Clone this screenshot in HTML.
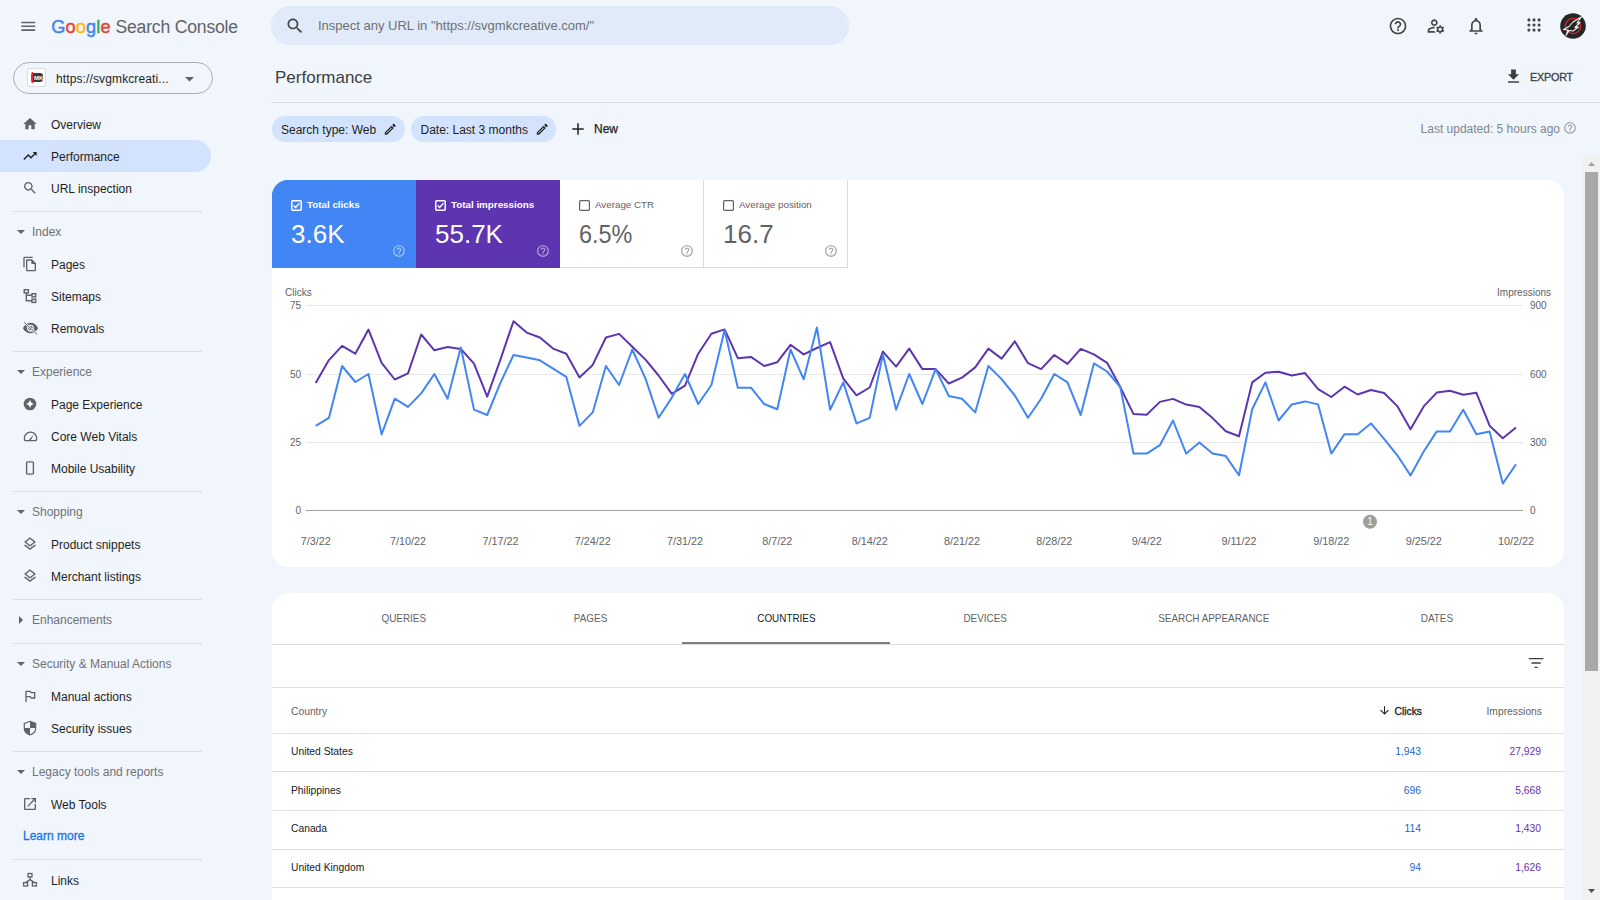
<!DOCTYPE html>
<html><head><meta charset="utf-8"><style>
*{margin:0;padding:0;box-sizing:border-box}
html,body{width:1600px;height:900px;overflow:hidden}
body{background:#f1f5fc;font-family:"Liberation Sans",sans-serif;position:relative}
.ic{position:absolute;display:block}
.nt{position:absolute;left:51px;height:16px;line-height:16px;font-size:12px;white-space:nowrap}
.nh{position:absolute;left:32px;height:16px;line-height:16px;font-size:12px;color:#6f7377;white-space:nowrap}
.cl{position:absolute;top:198px;height:14px;line-height:14px;font-size:9.8px;white-space:nowrap}
.cv{position:absolute;top:218.5px;height:30px;line-height:30px;font-size:26px;white-space:nowrap}
.tab{position:absolute;top:610px;width:200px;text-align:center;height:16px;line-height:16px;font-size:11px;white-space:nowrap}
.td{position:absolute;height:16px;line-height:16px;font-size:10.3px;white-space:nowrap}
.r{text-align:right}
</style></head><body>
<!-- header -->
<svg class="ic" style="left:18.8px;top:16.8px;width:18.5px;height:18.5px" viewBox="0 0 24 24"><path fill="#5f6368" d="M3 18h18v-2H3v2zm0-5h18v-2H3v2zm0-7v2h18V6H3z"/></svg>
<div style="position:absolute;left:51.2px;top:14.6px;height:24px;line-height:24px;font-size:18.2px;letter-spacing:.15px;white-space:nowrap"><span style="color:#4285f4;-webkit-text-stroke:.45px #4285f4">G</span><span style="color:#ea4335;-webkit-text-stroke:.45px #ea4335">o</span><span style="color:#fbbc05;-webkit-text-stroke:.45px #fbbc05">o</span><span style="color:#4285f4;-webkit-text-stroke:.45px #4285f4">g</span><span style="color:#34a853;-webkit-text-stroke:.45px #34a853">l</span><span style="color:#ea4335;-webkit-text-stroke:.45px #ea4335">e</span></div>
<div style="position:absolute;left:115.5px;top:15px;height:24px;line-height:24px;font-size:17.6px;letter-spacing:-.2px;white-space:nowrap;color:#616467">Search Console</div>
<div style="position:absolute;left:271px;top:6px;width:578px;height:39px;border-radius:19.5px;background:#e1eaf8"></div>
<svg class="ic" style="left:284.5px;top:16px;width:20px;height:20px" viewBox="0 0 24 24"><path fill="#444746" d="M15.5 14h-.79l-.28-.27C15.41 12.59 16 11.11 16 9.5 16 5.91 13.09 3 9.5 3S3 5.91 3 9.5 5.91 16 9.5 16c1.61 0 3.09-.59 4.23-1.57l.27.28v.79l5 4.99L20.49 19l-4.99-5zm-6 0C7.01 14 5 11.99 5 9.5S7.01 5 9.5 5 14 7.01 14 9.5 11.99 14 9.5 14z"/></svg>
<div style="position:absolute;left:318px;top:18px;height:16px;line-height:16px;font-size:13px;color:#6d7175;white-space:nowrap">Inspect any URL in "https://svgmkcreative.com/"</div>
<svg class="ic" style="left:1388px;top:15.5px;width:20px;height:20px" viewBox="0 0 24 24"><path fill="#444746" d="M11 18h2v-2h-2v2zm1-16C6.48 2 2 6.48 2 12s4.48 10 10 10 10-4.48 10-10S17.52 2 12 2zm0 18c-4.41 0-8-3.59-8-8s3.59-8 8-8 8 3.59 8 8-3.59 8-8 8zm0-14c-2.21 0-4 1.79-4 4h2c0-1.1.9-2 2-2s2 .9 2 2c0 2-3 1.75-3 5h2c0-2.25 3-2.5 3-5 0-2.21-1.79-4-4-4z"/></svg>
<svg class="ic" style="left:1426px;top:15.5px;width:20px;height:20px" viewBox="0 0 24 24"><path fill="#444746" d="M4 18v-.65c0-.34.16-.66.41-.81C6.1 15.53 8.03 15 10 15c.03 0 .05 0 .08.01.1-.7.3-1.37.59-1.98-.22-.02-.44-.03-.67-.03-2.42 0-4.68.67-6.61 1.82-.88.52-1.39 1.5-1.39 2.53V20h9.26c-.42-.6-.75-1.28-.97-2H4zM10 12c2.21 0 4-1.79 4-4s-1.79-4-4-4-4 1.79-4 4 1.79 4 4 4zm0-6c1.1 0 2 .9 2 2s-.9 2-2 2-2-.9-2-2 .9-2 2-2zM20.75 16c0-.22-.03-.42-.06-.63l1.14-1.01-1-1.73-1.450.49c-.32-.27-.68-.48-1.08-.63L18 11h-2l-.3 1.49c-.4.15-.76.36-1.08.63l-1.45-.49-1 1.73 1.14 1.010c-.03.21-.06.41-.06.63s.03.42.06.63l-1.14 1.01 1 1.73 1.45-.49c.32.27.68.48 1.08.63L16 21h2l.3-1.49c.4-.15.76-.36 1.08-.63l1.45.49 1-1.73-1.14-1.01c.03-.21.06-.41.06-.63zM17 18c-1.1 0-2-.9-2-2s.9-2 2-2 2 .9 2 2-.9 2-2 2z"/></svg>
<svg class="ic" style="left:1465.5px;top:15.5px;width:20px;height:20px" viewBox="0 0 24 24"><path fill="#444746" d="M12 22c1.1 0 2-.9 2-2h-4c0 1.1.9 2 2 2zm6-6v-5c0-3.07-1.64-5.64-4.5-6.32V4c0-.83-.67-1.5-1.5-1.5s-1.5.67-1.5 1.5v.68C7.63 5.36 6 7.92 6 11v5l-2 2v1h16v-1l-2-2zm-2 1H8v-6c0-2.48 1.51-4.5 4-4.5s4 2.02 4 4.5v6z"/></svg>
<svg class="ic" style="left:1524.4px;top:15.4px;width:20px;height:20px" viewBox="0 0 20 20" fill="#444746"><circle cx="4.9" cy="4.9" r="1.55"/><circle cx="10" cy="4.9" r="1.55"/><circle cx="15.1" cy="4.9" r="1.55"/><circle cx="4.9" cy="10" r="1.55"/><circle cx="10" cy="10" r="1.55"/><circle cx="15.1" cy="10" r="1.55"/><circle cx="4.9" cy="15.1" r="1.55"/><circle cx="10" cy="15.1" r="1.55"/><circle cx="15.1" cy="15.1" r="1.55"/></svg>
<svg class="ic" style="left:1560px;top:12.6px;width:26px;height:26px" viewBox="0 0 26 26"><circle cx="13" cy="13" r="12.8" fill="#262626"/><circle cx="13" cy="13" r="7.6" fill="none" stroke="#d7262b" stroke-width="1.4"/><path d="M3.5 16.5 L9 13.5 L13 9 L21.5 3.8 L17 10 L20 9.5 L15 14.5 L18.5 14 L13 18 L9 17.5 L6 22.5 L8 17z" fill="#262626" stroke="#f0f0f0" stroke-width="1.1" stroke-linejoin="round"/></svg>

<!-- property selector -->
<div style="position:absolute;left:13px;top:62px;width:200px;height:32px;border:1px solid #acb0b4;border-radius:16px"></div>
<div style="position:absolute;left:27.2px;top:68.3px;width:18.5px;height:18.3px;background:#fff;border:1px solid #dcdcdc;border-radius:2px"></div>
<div style="position:absolute;left:31px;top:72px;width:2.5px;height:11px;background:#e3262b;border-radius:50%"></div>
<div style="position:absolute;left:33px;top:72.5px;width:9.5px;height:9.5px;background:#3a3a3a;border-radius:1px 3px 3px 1px"></div>
<div style="position:absolute;left:34px;top:74.5px;height:6px;line-height:6px;font-size:6px;font-weight:700;color:#fff;white-space:nowrap">MK</div>
<div style="position:absolute;left:56px;top:70.8px;height:16px;line-height:16px;font-size:12px;letter-spacing:.12px;color:#1f1f1f;white-space:nowrap">https://svgmkcreati...</div>
<svg class="ic" style="left:185px;top:77px;width:9px;height:5px" viewBox="0 0 9 5"><path fill="#5f6368" d="M0 0h9L4.5 4.5z"/></svg>

<div class="nt" style="top:116.5px;color:#1f1f1f">Overview</div>
<svg class="ic" style="left:22px;top:116px;width:16px;height:16px" viewBox="0 0 24 24"><path fill="#5f6368" d="M10 20v-6h4v6h5v-8h3L12 3 2 12h3v8z"/></svg>
<div style="position:absolute;left:0;top:140px;width:211px;height:32px;background:#d3e3fd;border-radius:0 16px 16px 0"></div><div class="nt" style="top:148.5px;color:#1f1f1f">Performance</div>
<svg class="ic" style="left:22px;top:148px;width:16px;height:16px" viewBox="0 0 24 24"><path fill="#1f1f1f" d="M16 6l2.29 2.29-4.88 4.88-4-4L2 16.59 3.41 18l6-6 4 4 6.3-6.29L22 12V6z"/></svg>
<div class="nt" style="top:180.5px;color:#1f1f1f">URL inspection</div>
<svg class="ic" style="left:22px;top:180px;width:16px;height:16px" viewBox="0 0 24 24"><path fill="#5f6368" d="M15.5 14h-.79l-.28-.27C15.41 12.59 16 11.11 16 9.5 16 5.91 13.09 3 9.5 3S3 5.91 3 9.5 5.91 16 9.5 16c1.61 0 3.09-.59 4.23-1.57l.27.28v.79l5 4.99L20.49 19l-4.99-5zm-6 0C7.01 14 5 11.99 5 9.5S7.01 5 9.5 5 14 7.01 14 9.5 11.99 14 9.5 14z"/></svg>
<div style="position:absolute;left:13px;top:211px;width:189px;height:1px;background:#dadce0"></div>
<svg class="ic" style="left:17px;top:228px;width:8px;height:8px" viewBox="0 0 8 8"><path fill="#5f6368" d="M0 2h8L4 6z"/></svg><div class="nh" style="top:224px">Index</div>
<div class="nt" style="top:256.5px;color:#1f1f1f">Pages</div>
<svg class="ic" style="left:22px;top:256px;width:16px;height:16px" viewBox="0 0 24 24"><path fill="#5f6368" d="M16 1H4c-1.1 0-2 .9-2 2v14h2V3h12V1zm-1 4H8c-1.1 0-1.99.9-1.99 2L6 21c0 1.1.89 2 1.99 2H19c1.1 0 2-.9 2-2V11l-6-6zM8 21V7h6v5h5v9H8z"/></svg>
<div class="nt" style="top:288.5px;color:#1f1f1f">Sitemaps</div>
<svg class="ic" style="left:22px;top:288px;width:16px;height:16px" viewBox="0 0 16 16"><g fill="none" stroke="#5f6368" stroke-width="1.4"><rect x="2.2" y="1.7" width="4.2" height="3.2"/><rect x="10" y="5.7" width="3.7" height="3.2"/><rect x="10" y="11.2" width="3.7" height="3.2"/><path d="M4.3 4.9V12.8H10M4.3 7.3H10"/></g></svg>
<div class="nt" style="top:320.5px;color:#1f1f1f">Removals</div>
<svg class="ic" style="left:22px;top:320px;width:16px;height:16px" viewBox="0 0 16 16"><path fill="#5f6368" d="M1 8.2 C4 0.9 13 0.9 16 8.2 C13 15 4 15 1 8.2z"/><circle cx="8.5" cy="8.2" r="2.9" fill="#5f6368" stroke="#fff" stroke-width="1.1"/><path d="M2.2 2.4 15.2 14.4" stroke="#f1f5fc" stroke-width="2.2"/><path d="M2.2 2.4 15.2 14.4" stroke="#5f6368" stroke-width="1"/></svg>
<div style="position:absolute;left:13px;top:351px;width:189px;height:1px;background:#dadce0"></div>
<svg class="ic" style="left:17px;top:368px;width:8px;height:8px" viewBox="0 0 8 8"><path fill="#5f6368" d="M0 2h8L4 6z"/></svg><div class="nh" style="top:364px">Experience</div>
<div class="nt" style="top:396.5px;color:#1f1f1f">Page Experience</div>
<svg class="ic" style="left:22px;top:396px;width:16px;height:16px" viewBox="0 0 16 16"><circle cx="8" cy="8" r="6.3" fill="#5f6368"/><path fill="#fff" d="M8 3.8 Q8.6 7.4 12.2 8 Q8.6 8.6 8 12.2 Q7.4 8.6 3.8 8 Q7.4 7.4 8 3.8z"/></svg>
<div class="nt" style="top:428.5px;color:#1f1f1f">Core Web Vitals</div>
<svg class="ic" style="left:22px;top:428px;width:16px;height:16px" viewBox="0 0 16 16"><path fill="none" stroke="#5f6368" stroke-width="1.3" d="M2.9 12.6 A6.1 6.1 0 1 1 14.1 12.6 Z"/><path fill="#5f6368" d="M7.1 11.6 L11.9 6.6 L8.6 12.4z"/></svg>
<div class="nt" style="top:460.5px;color:#1f1f1f">Mobile Usability</div>
<svg class="ic" style="left:22px;top:460px;width:16px;height:16px" viewBox="0 0 16 16"><rect x="4.6" y="1.9" width="6.8" height="12.2" rx="1" fill="none" stroke="#5f6368" stroke-width="1.4"/></svg>
<div style="position:absolute;left:13px;top:491px;width:189px;height:1px;background:#dadce0"></div>
<svg class="ic" style="left:17px;top:508px;width:8px;height:8px" viewBox="0 0 8 8"><path fill="#5f6368" d="M0 2h8L4 6z"/></svg><div class="nh" style="top:504px">Shopping</div>
<div class="nt" style="top:536.5px;color:#1f1f1f">Product snippets</div>
<svg class="ic" style="left:22px;top:536px;width:16px;height:16px" viewBox="0 0 24 24"><path fill="#5f6368" d="M11.99 18.54l-7.37-5.73L3 14.07l9 7 9-7-1.63-1.27-7.38 5.74zM12 16l7.36-5.73L21 9l-9-7-9 7 1.63 1.27L12 16zm0-11.47L17.74 9 12 13.47 6.26 9 12 4.53z"/></svg>
<div class="nt" style="top:568.5px;color:#1f1f1f">Merchant listings</div>
<svg class="ic" style="left:22px;top:568px;width:16px;height:16px" viewBox="0 0 24 24"><path fill="#5f6368" d="M11.99 18.54l-7.37-5.73L3 14.07l9 7 9-7-1.63-1.27-7.38 5.74zM12 16l7.36-5.73L21 9l-9-7-9 7 1.63 1.27L12 16zm0-11.47L17.74 9 12 13.47 6.26 9 12 4.53z"/></svg>
<div style="position:absolute;left:13px;top:599px;width:189px;height:1px;background:#dadce0"></div>
<svg class="ic" style="left:17px;top:616px;width:8px;height:8px" viewBox="0 0 8 8"><path fill="#5f6368" d="M2 0v8l4-4z"/></svg><div class="nh" style="top:612px">Enhancements</div>
<div style="position:absolute;left:13px;top:643px;width:189px;height:1px;background:#dadce0"></div>
<svg class="ic" style="left:17px;top:660px;width:8px;height:8px" viewBox="0 0 8 8"><path fill="#5f6368" d="M0 2h8L4 6z"/></svg><div class="nh" style="top:656px">Security &amp; Manual Actions</div>
<div class="nt" style="top:688.5px;color:#1f1f1f">Manual actions</div>
<svg class="ic" style="left:22px;top:688px;width:16px;height:16px" viewBox="0 0 24 24"><path fill="#5f6368" d="M14 6l-1-2H5v17h2v-7h5l1 2h7V6h-6zm4 8h-4l-1-2H7V6h5l1 2h5v6z"/></svg>
<div class="nt" style="top:720.5px;color:#1f1f1f">Security issues</div>
<svg class="ic" style="left:22px;top:720px;width:16px;height:16px" viewBox="0 0 16 16"><path d="M8 1.3 L13.7 3.5 V7.8 C13.7 11.2 11.3 14 8 14.8 C4.7 14 2.3 11.2 2.3 7.8 V3.5z" fill="none" stroke="#5f6368" stroke-width="1.2"/><path fill="#5f6368" d="M8 1.3 L13.7 3.5 V8 H8z M2.3 8 H8 V14.8 C4.7 14 2.3 11.2 2.3 8z"/></svg>
<div style="position:absolute;left:13px;top:751px;width:189px;height:1px;background:#dadce0"></div>
<svg class="ic" style="left:17px;top:768px;width:8px;height:8px" viewBox="0 0 8 8"><path fill="#5f6368" d="M0 2h8L4 6z"/></svg><div class="nh" style="top:764px">Legacy tools and reports</div>
<div class="nt" style="top:796.5px;color:#1f1f1f">Web Tools</div>
<svg class="ic" style="left:22px;top:796px;width:16px;height:16px" viewBox="0 0 24 24"><path fill="#5f6368" d="M19 19H5V5h7V3H5c-1.11 0-2 .9-2 2v14c0 1.1.89 2 2 2h14c1.1 0 2-.9 2-2v-7h-2v7zM14 3v2h3.59l-9.83 9.83 1.41 1.41L19 6.41V10h2V3h-7z"/></svg>
<div class="nt" style="top:828px;left:23px;color:#1a73e8;-webkit-text-stroke:.3px #1a73e8">Learn more</div>
<div style="position:absolute;left:13px;top:859px;width:189px;height:1px;background:#dadce0"></div>
<div class="nt" style="top:872.5px;color:#1f1f1f">Links</div>
<svg class="ic" style="left:22px;top:872px;width:16px;height:16px" viewBox="0 0 16 16"><g fill="none" stroke="#5f6368" stroke-width="1.3"><rect x="6" y="1.5" width="4" height="3.4"/><rect x="1.6" y="10.6" width="4" height="3.4"/><rect x="10.4" y="10.6" width="4" height="3.4"/><path d="M8 4.9V7.6M3.6 10.6 8 7.6 12.4 10.6"/></g></svg>

<!-- page title -->
<div style="position:absolute;left:275px;top:68px;height:20px;line-height:20px;font-size:17px;color:#3c4043;white-space:nowrap">Performance</div>
<svg class="ic" style="left:1504.3px;top:67px;width:19px;height:19px" viewBox="0 0 24 24"><path fill="#3c4043" d="M19 9h-4V3H9v6H5l7 7 7-7zM5 18v2h14v-2H5z"/></svg>
<div style="position:absolute;left:1530px;top:69px;height:16px;line-height:16px;font-size:10.8px;letter-spacing:-.2px;color:#3c4043;-webkit-text-stroke:.3px #3c4043;white-space:nowrap">EXPORT</div>
<div style="position:absolute;left:271px;top:102px;width:1329px;height:1px;background:#dadce0"></div>

<!-- chips -->
<div style="position:absolute;left:272px;top:116px;width:133px;height:26px;border-radius:13px;background:#d3e3fd"></div>
<div style="position:absolute;left:281px;top:121.5px;height:16px;line-height:16px;font-size:12px;color:#1f1f1f;white-space:nowrap">Search type: Web</div>
<svg class="ic" style="left:383px;top:122px;width:14.5px;height:14.5px" viewBox="0 0 24 24"><path fill="#1f1f1f" d="M3 17.25V21h3.75L17.81 9.94l-3.75-3.75L3 17.25zM5.92 19H5v-.92l9.06-9.06.92.92L5.92 19zM20.71 5.63l-2.34-2.34c-.2-.2-.45-.29-.71-.29s-.51.1-.7.29l-1.83 1.83 3.75 3.75 1.83-1.83c.39-.39.39-1.02 0-1.41z"/></svg>
<div style="position:absolute;left:411px;top:116px;width:145px;height:26px;border-radius:13px;background:#d3e3fd"></div>
<div style="position:absolute;left:420.5px;top:121.5px;height:16px;line-height:16px;font-size:12px;color:#1f1f1f;white-space:nowrap">Date: Last 3 months</div>
<svg class="ic" style="left:534.5px;top:122px;width:14.5px;height:14.5px" viewBox="0 0 24 24"><path fill="#1f1f1f" d="M3 17.25V21h3.75L17.81 9.94l-3.75-3.75L3 17.25zM5.92 19H5v-.92l9.06-9.06.92.92L5.92 19zM20.71 5.63l-2.34-2.34c-.2-.2-.45-.29-.71-.29s-.51.1-.7.29l-1.83 1.83 3.75 3.75 1.83-1.83c.39-.39.39-1.02 0-1.41z"/></svg>
<svg class="ic" style="left:572px;top:123px;width:12px;height:12px" viewBox="0 0 12 12"><path d="M6 0.3V11.7M0.3 6H11.7" stroke="#1f1f1f" stroke-width="1.5"/></svg>
<div style="position:absolute;left:594px;top:121px;height:16px;line-height:16px;font-size:12px;color:#1f1f1f;-webkit-text-stroke:.25px #1f1f1f;white-space:nowrap">New</div>
<div style="position:absolute;right:40px;top:121px;height:16px;line-height:16px;font-size:12px;color:#80868b;white-space:nowrap">Last updated: 5 hours ago</div>
<svg class="ic" style="left:1563px;top:121px;width:14px;height:14px" viewBox="0 0 24 24"><path fill="#9aa0a6" d="M11 18h2v-2h-2v2zm1-16C6.48 2 2 6.48 2 12s4.48 10 10 10 10-4.48 10-10S17.52 2 12 2zm0 18c-4.41 0-8-3.59-8-8s3.59-8 8-8 8 3.59 8 8-3.59 8-8 8zm0-14c-2.21 0-4 1.79-4 4h2c0-1.1.9-2 2-2s2 .9 2 2c0 2-3 1.75-3 5h2c0-2.25 3-2.5 3-5 0-2.21-1.79-4-4-4z"/></svg>

<!-- chart card -->
<div style="position:absolute;left:272px;top:180px;width:1292px;height:387px;background:#fff;border-radius:16px;overflow:hidden">
<div style="position:absolute;left:0;top:0;width:144px;height:88px;background:#4285f4"></div>
</div>

<div style="position:absolute;left:272px;top:180px;width:144px;height:88px;background:#4285f4;border-top-left-radius:16px"></div>
<div style="position:absolute;left:416px;top:180px;width:144px;height:88px;background:#5e35b1"></div>
<div style="position:absolute;left:560px;top:180px;width:144px;height:88px;border-right:1px solid #dadce0;border-bottom:1px solid #dadce0"></div>
<div style="position:absolute;left:704px;top:180px;width:144px;height:88px;border-right:1px solid #dadce0;border-bottom:1px solid #dadce0"></div>
<svg class="ic" style="left:291px;top:200px;width:11px;height:11px" viewBox="0 0 11 11"><rect x="0.75" y="0.75" width="9.5" height="9.5" rx="1" fill="none" stroke="#fff" stroke-width="1.5"/><path d="M2.6 5.6 4.6 7.5 8.4 3.3" fill="none" stroke="#fff" stroke-width="1.4"/></svg><svg class="ic" style="left:435px;top:200px;width:11px;height:11px" viewBox="0 0 11 11"><rect x="0.75" y="0.75" width="9.5" height="9.5" rx="1" fill="none" stroke="#fff" stroke-width="1.5"/><path d="M2.6 5.6 4.6 7.5 8.4 3.3" fill="none" stroke="#fff" stroke-width="1.4"/></svg><svg class="ic" style="left:579px;top:200px;width:11px;height:11px" viewBox="0 0 11 11"><rect x="0.6" y="0.6" width="9.8" height="9.8" rx="1" fill="none" stroke="#5f6368" stroke-width="1.2"/></svg><svg class="ic" style="left:723px;top:200px;width:11px;height:11px" viewBox="0 0 11 11"><rect x="0.6" y="0.6" width="9.8" height="9.8" rx="1" fill="none" stroke="#5f6368" stroke-width="1.2"/></svg>
<div class="cl" style="left:307px;color:#fff;font-weight:700">Total clicks</div>
<div class="cl" style="left:451px;color:#fff;font-weight:700">Total impressions</div>
<div class="cl" style="left:595px;color:#5f6368">Average CTR</div>
<div class="cl" style="left:739px;color:#5f6368">Average position</div>
<div class="cv" style="left:291px;color:#fff">3.6K</div>
<div class="cv" style="left:435px;color:#fff">55.7K</div>
<div class="cv" style="left:579px;color:#5f6368;transform:scaleX(.9);transform-origin:0 0">6.5%</div>
<div class="cv" style="left:723px;color:#5f6368">16.7</div>
<svg class="ic" style="left:392px;top:244px;width:14px;height:14px" viewBox="0 0 24 24"><path fill="rgba(255,255,255,.55)" d="M11 18h2v-2h-2v2zm1-16C6.48 2 2 6.48 2 12s4.48 10 10 10 10-4.48 10-10S17.52 2 12 2zm0 18c-4.41 0-8-3.59-8-8s3.59-8 8-8 8 3.59 8 8-3.59 8-8 8zm0-14c-2.21 0-4 1.79-4 4h2c0-1.1.9-2 2-2s2 .9 2 2c0 2-3 1.75-3 5h2c0-2.25 3-2.5 3-5 0-2.21-1.79-4-4-4z"/></svg><svg class="ic" style="left:536px;top:244px;width:14px;height:14px" viewBox="0 0 24 24"><path fill="rgba(255,255,255,.55)" d="M11 18h2v-2h-2v2zm1-16C6.48 2 2 6.48 2 12s4.48 10 10 10 10-4.48 10-10S17.52 2 12 2zm0 18c-4.41 0-8-3.59-8-8s3.59-8 8-8 8 3.59 8 8-3.59 8-8 8zm0-14c-2.21 0-4 1.79-4 4h2c0-1.1.9-2 2-2s2 .9 2 2c0 2-3 1.75-3 5h2c0-2.25 3-2.5 3-5 0-2.21-1.79-4-4-4z"/></svg><svg class="ic" style="left:680px;top:244px;width:14px;height:14px" viewBox="0 0 24 24"><path fill="#9aa0a6" d="M11 18h2v-2h-2v2zm1-16C6.48 2 2 6.48 2 12s4.48 10 10 10 10-4.48 10-10S17.52 2 12 2zm0 18c-4.41 0-8-3.59-8-8s3.59-8 8-8 8 3.59 8 8-3.59 8-8 8zm0-14c-2.21 0-4 1.79-4 4h2c0-1.1.9-2 2-2s2 .9 2 2c0 2-3 1.75-3 5h2c0-2.25 3-2.5 3-5 0-2.21-1.79-4-4-4z"/></svg><svg class="ic" style="left:824px;top:244px;width:14px;height:14px" viewBox="0 0 24 24"><path fill="#9aa0a6" d="M11 18h2v-2h-2v2zm1-16C6.48 2 2 6.48 2 12s4.48 10 10 10 10-4.48 10-10S17.52 2 12 2zm0 18c-4.41 0-8-3.59-8-8s3.59-8 8-8 8 3.59 8 8-3.59 8-8 8zm0-14c-2.21 0-4 1.79-4 4h2c0-1.1.9-2 2-2s2 .9 2 2c0 2-3 1.75-3 5h2c0-2.25 3-2.5 3-5 0-2.21-1.79-4-4-4z"/></svg>

<svg style="position:absolute;left:0;top:0;width:1600px;height:900px" viewBox="0 0 1600 900">
<line x1="306" y1="305.5" x2="1523" y2="305.5" stroke="#e8e8e8" stroke-width="1"/><line x1="306" y1="374.5" x2="1523" y2="374.5" stroke="#e8e8e8" stroke-width="1"/><line x1="306" y1="442.5" x2="1523" y2="442.5" stroke="#e8e8e8" stroke-width="1"/><line x1="306" y1="510.5" x2="1523" y2="510.5" stroke="#a0a0a0" stroke-width="1"/>
<g font-family="Liberation Sans" font-size="10" fill="#5f6368"><text x="301" y="308.5" text-anchor="end">75</text><text x="1530" y="308.5">900</text><text x="301" y="377.5" text-anchor="end">50</text><text x="1530" y="377.5">600</text><text x="301" y="445.5" text-anchor="end">25</text><text x="1530" y="445.5">300</text><text x="301" y="513.5" text-anchor="end">0</text><text x="1530" y="513.5">0</text><text x="315.7" y="544.6" text-anchor="middle" font-size="10.8">7/3/22</text><text x="408.0" y="544.6" text-anchor="middle" font-size="10.8">7/10/22</text><text x="500.4" y="544.6" text-anchor="middle" font-size="10.8">7/17/22</text><text x="592.7" y="544.6" text-anchor="middle" font-size="10.8">7/24/22</text><text x="685.0" y="544.6" text-anchor="middle" font-size="10.8">7/31/22</text><text x="777.3" y="544.6" text-anchor="middle" font-size="10.8">8/7/22</text><text x="869.7" y="544.6" text-anchor="middle" font-size="10.8">8/14/22</text><text x="962.0" y="544.6" text-anchor="middle" font-size="10.8">8/21/22</text><text x="1054.3" y="544.6" text-anchor="middle" font-size="10.8">8/28/22</text><text x="1146.7" y="544.6" text-anchor="middle" font-size="10.8">9/4/22</text><text x="1239.0" y="544.6" text-anchor="middle" font-size="10.8">9/11/22</text><text x="1331.3" y="544.6" text-anchor="middle" font-size="10.8">9/18/22</text><text x="1423.7" y="544.6" text-anchor="middle" font-size="10.8">9/25/22</text><text x="1516.0" y="544.6" text-anchor="middle" font-size="10.8">10/2/22</text>
<text x="285" y="296">Clicks</text><text x="1551" y="296" text-anchor="end">Impressions</text></g>
<polyline points="315.7,382.9 328.9,360.1 342.1,345.9 355.3,353.7 368.5,329.6 381.6,362.8 394.8,379.5 408.0,373.4 421.2,334.5 434.4,350.3 447.6,347.0 460.8,348.9 474.0,363.6 487.2,396.6 500.4,359.6 513.5,321.2 526.7,332.6 539.9,337.5 553.1,348.6 566.3,353.7 579.5,377.4 592.7,364.9 605.9,337.5 619.1,333.9 632.3,346.7 645.5,359.6 658.6,375.5 671.8,393.8 685.0,385.6 698.2,353.7 711.4,333.7 724.6,329.4 737.8,358.2 751.0,356.9 764.2,366.0 777.3,362.2 790.5,344.8 803.7,354.4 816.9,348.0 830.1,342.1 843.3,378.6 856.5,395.3 869.7,387.5 882.9,351.6 896.1,366.6 909.2,348.6 922.4,369.1 935.6,369.1 948.8,383.5 962.0,377.6 975.2,367.4 988.4,348.6 1001.6,358.6 1014.8,341.3 1028.0,363.2 1041.1,369.1 1054.3,355.0 1067.5,363.9 1080.7,348.9 1093.9,354.4 1107.1,362.8 1120.3,387.1 1133.5,414.1 1146.7,414.8 1159.9,401.9 1173.0,398.9 1186.2,404.6 1199.4,407.1 1212.6,418.1 1225.8,431.2 1239.0,436.3 1252.2,382.4 1265.4,372.7 1278.6,371.7 1291.8,375.5 1305.0,373.1 1318.1,389.2 1331.3,397.0 1344.5,386.7 1357.7,394.5 1370.9,390.0 1384.1,393.0 1397.3,406.1 1410.5,429.3 1423.7,406.4 1436.8,392.6 1450.0,390.7 1463.2,394.7 1476.4,392.8 1489.6,425.7 1502.8,438.2 1516.0,427.4" fill="none" stroke="#5e35b1" stroke-width="2" stroke-linejoin="round"/>
<polyline points="315.7,425.9 328.9,417.9 342.1,366.0 355.3,382.0 368.5,374.0 381.6,434.4 394.8,398.7 408.0,406.9 421.2,393.4 434.4,374.0 447.6,398.7 460.8,347.4 474.0,409.6 487.2,415.0 500.4,382.9 513.5,355.0 526.7,357.5 539.9,360.3 553.1,368.7 566.3,376.9 579.5,425.9 592.7,412.4 605.9,366.0 619.1,385.0 632.3,349.5 645.5,378.6 658.6,417.7 671.8,397.6 685.0,374.0 698.2,404.0 711.4,385.0 724.6,330.1 737.8,387.7 751.0,387.7 764.2,404.0 777.3,409.3 790.5,349.5 803.7,379.3 816.9,327.5 830.1,409.7 843.3,382.4 856.5,423.4 869.7,417.9 882.9,354.4 896.1,409.7 909.2,374.0 922.4,404.0 935.6,369.1 948.8,396.0 962.0,398.7 975.2,412.4 988.4,366.0 1001.6,379.1 1014.8,395.5 1028.0,417.7 1041.1,398.7 1054.3,374.0 1067.5,382.4 1080.7,415.0 1093.9,363.4 1107.1,371.5 1120.3,387.1 1133.5,453.6 1146.7,453.6 1159.9,445.2 1173.0,420.5 1186.2,453.6 1199.4,442.4 1212.6,453.6 1225.8,456.1 1239.0,475.2 1252.2,409.3 1265.4,382.4 1278.6,420.5 1291.8,404.4 1305.0,401.4 1318.1,404.4 1331.3,453.6 1344.5,434.2 1357.7,434.2 1370.9,423.4 1384.1,438.8 1397.3,455.3 1410.5,475.4 1423.7,451.5 1436.8,431.4 1450.0,431.4 1463.2,409.7 1476.4,434.2 1489.6,431.4 1502.8,483.6 1516.0,464.2" fill="none" stroke="#4285f4" stroke-width="2" stroke-linejoin="round"/>
<circle cx="1370" cy="521.7" r="7" fill="#9e9e9e"/><text x="1370" y="525.3" font-family="Liberation Sans" font-size="10" fill="#fff" text-anchor="middle">1</text>
</svg>

<!-- table card -->
<div style="position:absolute;left:272px;top:593px;width:1292px;height:400px;background:#fff;border-radius:16px"></div>
<div class="tab" style="left:304px;color:#5f6368"><span style="display:inline-block;transform:scaleX(.9)">QUERIES</span></div><div class="tab" style="left:491px;color:#5f6368"><span style="display:inline-block;transform:scaleX(.9)">PAGES</span></div><div class="tab" style="left:686px;color:#202124"><span style="display:inline-block;transform:scaleX(.9)">COUNTRIES</span></div><div class="tab" style="left:885.5px;color:#5f6368"><span style="display:inline-block;transform:scaleX(.9)">DEVICES</span></div><div class="tab" style="left:1114px;color:#5f6368"><span style="display:inline-block;transform:scaleX(.9)">SEARCH APPEARANCE</span></div><div class="tab" style="left:1337px;color:#5f6368"><span style="display:inline-block;transform:scaleX(.9)">DATES</span></div>
<div style="position:absolute;left:272px;top:644px;width:1292px;height:1px;background:#dadce0"></div>
<div style="position:absolute;left:682px;top:642px;width:208px;height:2px;background:#7a7e82"></div>
<div style="position:absolute;left:272px;top:687px;width:1292px;height:1px;background:#e0e0e0"></div>
<svg class="ic" style="left:1528px;top:657px;width:16px;height:12px" viewBox="0 0 16 12"><path d="M0.8 1.6H15.4M3.5 6H12.7M6.6 10.3H9.6" stroke="#3c4043" stroke-width="1.3"/></svg>
<div class="td" style="top:704px;left:291px;color:#5f6368">Country</div>
<svg class="ic" style="left:1377.5px;top:704px;width:13px;height:13px" viewBox="0 0 24 24"><path fill="#202124" d="M20 12l-1.41-1.41L13 16.17V4h-2v12.17l-5.58-5.59L4 12l8 8 8-8z"/></svg>
<div class="td" style="top:703.5px;right:178px;color:#202124;-webkit-text-stroke:.3px #202124">Clicks</div>
<div class="td" style="top:703.5px;right:58px;color:#5f6368">Impressions</div>
<div class="td" style="top:744px;left:291px;color:#202124">United States</div><div class="td r" style="top:744px;right:179px;color:#1967d2">1,943</div><div class="td r" style="top:744px;right:59px;color:#6f2da8">27,929</div><div class="td" style="top:783px;left:291px;color:#202124">Philippines</div><div class="td r" style="top:783px;right:179px;color:#1967d2">696</div><div class="td r" style="top:783px;right:59px;color:#6f2da8">5,668</div><div class="td" style="top:821px;left:291px;color:#202124">Canada</div><div class="td r" style="top:821px;right:179px;color:#1967d2">114</div><div class="td r" style="top:821px;right:59px;color:#6f2da8">1,430</div><div class="td" style="top:860px;left:291px;color:#202124">United Kingdom</div><div class="td r" style="top:860px;right:179px;color:#1967d2">94</div><div class="td r" style="top:860px;right:59px;color:#6f2da8">1,626</div><div style="position:absolute;left:272px;top:733px;width:1292px;height:1px;background:#e0e0e0"></div><div style="position:absolute;left:272px;top:771px;width:1292px;height:1px;background:#e0e0e0"></div><div style="position:absolute;left:272px;top:810px;width:1292px;height:1px;background:#e0e0e0"></div><div style="position:absolute;left:272px;top:849px;width:1292px;height:1px;background:#e0e0e0"></div><div style="position:absolute;left:272px;top:887px;width:1292px;height:1px;background:#e0e0e0"></div>

<!-- scrollbar -->
<div style="position:absolute;left:1583px;top:155px;width:17px;height:745px;background:#f1f1f1"></div>
<div style="position:absolute;left:1585px;top:172px;width:13px;height:499px;background:#a8a8a8"></div>
<svg class="ic" style="left:1588px;top:162px;width:7px;height:4px" viewBox="0 0 7 4"><path fill="#a3a3a3" d="M0 4h7L3.5 0z"/></svg>
<svg class="ic" style="left:1588px;top:889px;width:7px;height:4px" viewBox="0 0 7 4"><path fill="#505050" d="M0 0h7L3.5 4z"/></svg>
</body></html>
